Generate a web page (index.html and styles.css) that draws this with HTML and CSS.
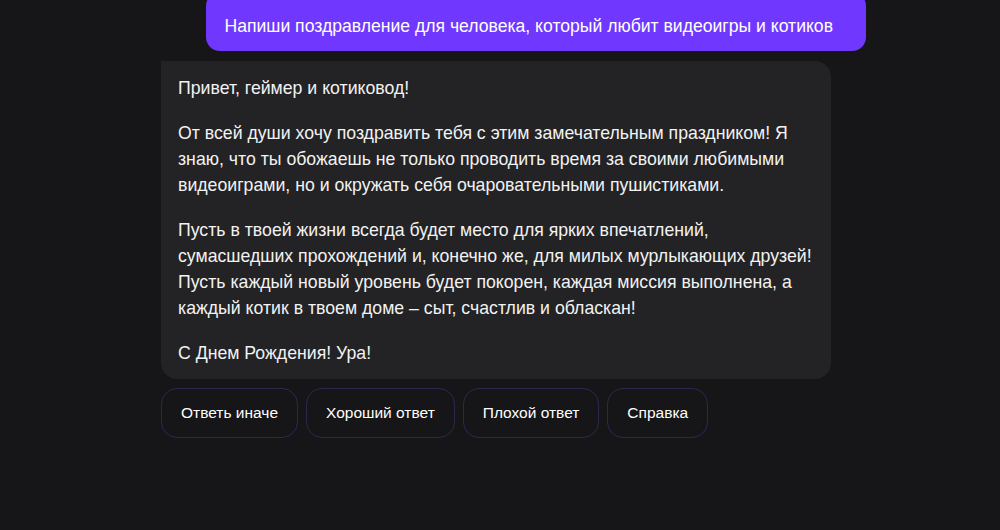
FILE: index.html
```html
<!DOCTYPE html>
<html lang="ru">
<head>
<meta charset="utf-8">
<link rel="stylesheet" href="styles.css">
</head>
<body>
<div class="chat">
  <div class="user-row">
    <div class="user-msg">Напиши поздравление для человека, который любит видеоигры и котиков</div>
  </div>
  <div class="bot-msg">
    <p>Привет, геймер и котиковод!</p>
    <p>От всей души хочу поздравить тебя с этим замечательным праздником! Я знаю, что ты обожаешь не только проводить время за своими любимыми видеоиграми, но и окружать себя очаровательными пушистиками.</p>
    <p>Пусть в твоей жизни всегда будет место для ярких впечатлений, сумасшедших прохождений и, конечно же, для милых мурлыкающих друзей! Пусть каждый новый уровень будет покорен, каждая миссия выполнена, а каждый котик в твоем доме – сыт, счастлив и обласкан!</p>
    <p>С Днем Рождения! Ура!</p>
  </div>
  <div class="actions">
    <button class="action">Ответь иначе</button>
    <button class="action">Хороший ответ</button>
    <button class="action">Плохой ответ</button>
    <button class="action">Справка</button>
  </div>
</div>
</body>
</html>
```

FILE: styles.css
```css
html, body {
  margin: 0;
  padding: 0;
  background: #161618;
  height: 100%;
  overflow: hidden;
}
body {
  font-family: "Liberation Sans", Arial, sans-serif;
  color: #f2f2f2;
}
.chat {
  margin-left: 161px;
  width: 705px;
  display: flex;
  flex-direction: column;
}
.user-row {
  display: flex;
  justify-content: flex-end;
}
.user-msg {
  margin-top: -8px;
  background: #7038fe;
  border-radius: 14px;
  padding: 23px 33px 13px 18px;
  font-size: 17.6px;
  line-height: 23px;
  color: #fff;
}
.bot-msg {
  margin-top: 10px;
  width: 670px;
  box-sizing: border-box;
  background: #232325;
  border-radius: 0 16px 16px 16px;
  padding: 14px 17px 13px 17px;
  font-size: 17.7px;
  line-height: 26px;
}
.bot-msg p {
  margin: 0 0 19px 0;
}
.bot-msg p:last-child {
  margin-bottom: 0;
}
.actions {
  display: flex;
  gap: 8px;
  margin-top: 9px;
}
.action {
  height: 50px;
  padding: 0 19px;
  background: transparent;
  border: 1px solid #2d2750;
  border-radius: 16px;
  color: #fff;
  font-family: "Liberation Sans", Arial, sans-serif;
  font-size: 15.5px;
}
```
